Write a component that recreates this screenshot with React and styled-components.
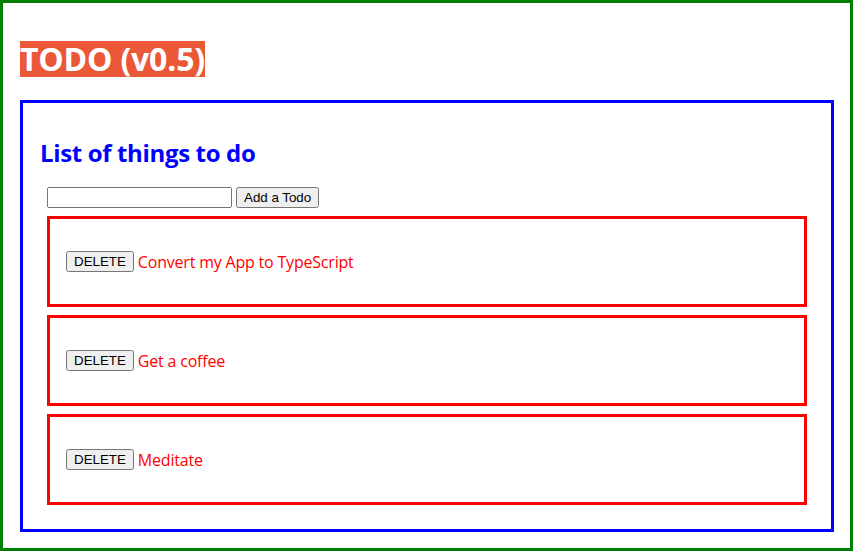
import React, { useState } from "react";
import styled, { createGlobalStyle } from "styled-components";

const GlobalStyle = createGlobalStyle`
  * { box-sizing: border-box; }
  body {
    margin: 0;
    background: #fff;
    font-family: "Open Sans", "Noto Sans", sans-serif;
  }
`;

const initialTodos = [
  { id: 1, title: "Convert my App to TypeScript" },
  { id: 2, title: "Get a coffee" },
  { id: 3, title: "Meditate" },
];

export default function App() {
  const [todos, setTodos] = useState(initialTodos);
  const [text, setText] = useState("");

  const addTodo = () => {
    if (!text.trim()) return;
    setTodos((prev) => [...prev, { id: Date.now(), title: text }]);
    setText("");
  };

  const deleteTodo = (id) => {
    setTodos((prev) => prev.filter((t) => t.id !== id));
  };

  return (
    <>
      <GlobalStyle />
      <Page>
        <Title>
          <span>TODO (v0.5)</span>
        </Title>
        <ListBox>
          <SubTitle>List of things to do</SubTitle>
          <Section>
            <AddRow>
              <TextInput
                type="text"
                value={text}
                onChange={(e) => setText(e.target.value)}
              />
              <NativeButton onClick={addTodo}>Add a Todo</NativeButton>
            </AddRow>
            {todos.map((todo) => (
              <TodoItem key={todo.id}>
                <NativeButton onClick={() => deleteTodo(todo.id)}>DELETE</NativeButton>
                <TodoText>{todo.title}</TodoText>
              </TodoItem>
            ))}
          </Section>
        </ListBox>
      </Page>
    </>
  );
}

const Page = styled.div`
  border: 3px solid #008000;
  padding: 17px 16px 16px 17px;
`;

const Title = styled.h1`
  margin: 21px 0 23px 0;
  font-size: 32px;
  font-weight: 700;
  line-height: 36px;
  letter-spacing: -0.2px;

  span {
    display: inline-block;
    background-color: #eb5838;
    color: #fff;
  }
`;

const ListBox = styled.div`
  border: 3px solid #0000ff;
  padding: 17px 17px 24px 17px;
`;

const SubTitle = styled.h2`
  margin: 17px 0 18px 0;
  font-size: 24px;
  font-weight: 700;
  line-height: 32px;
  letter-spacing: -0.35px;
  color: #0000ff;
`;

const Section = styled.div`
  margin: 0 7px;
  display: flex;
  flex-direction: column;
  gap: 8px;
`;

const AddRow = styled.div`
  display: flex;
  align-items: center;
  gap: 4px;
`;

const TextInput = styled.input`
  width: 185px;
  height: 21px;
  font-family: "Liberation Sans", Arial, sans-serif;
  font-size: 13.33px;
`;

const NativeButton = styled.button`
  font-family: "Liberation Sans", Arial, sans-serif;
  font-size: 13.33px;
  height: 21px;
  padding: 1px 6px;
`;

const TodoItem = styled.div`
  height: 91px;
  border: 3px solid #ff0000;
  padding: 0 16px;
  display: flex;
  align-items: center;
  gap: 4px;
`;

const TodoText = styled.span`
  color: #ff0000;
  font-size: 16px;
  letter-spacing: -0.2px;
`;
